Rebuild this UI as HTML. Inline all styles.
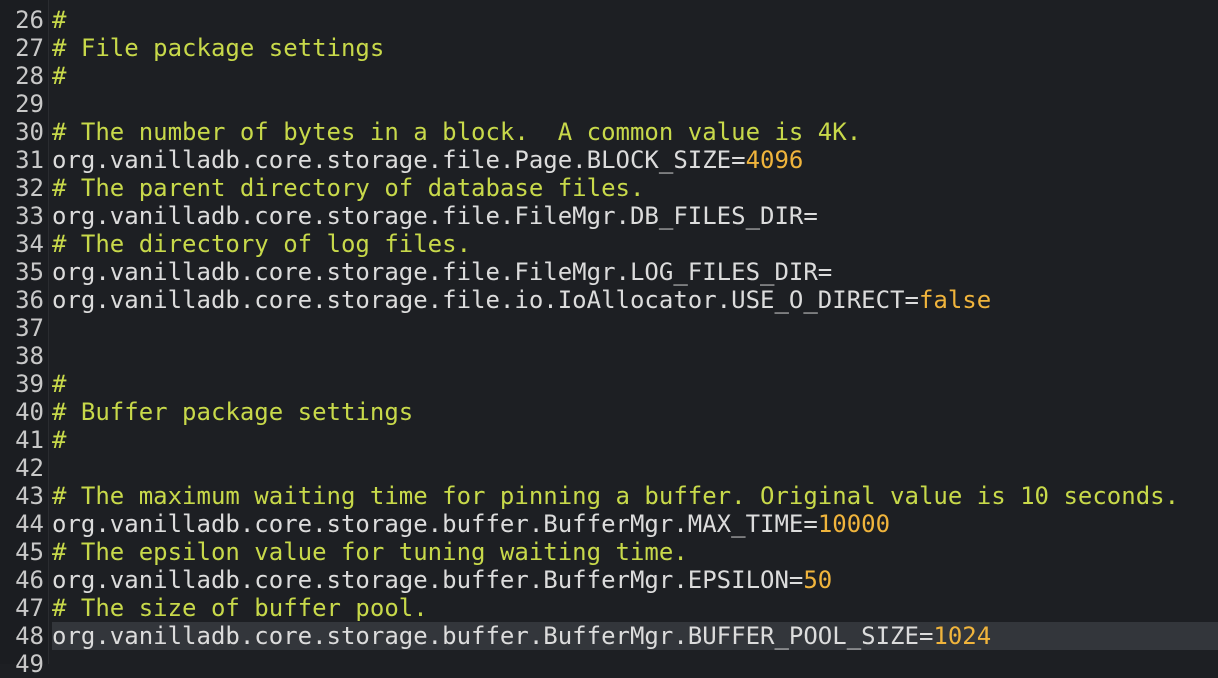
<!DOCTYPE html>
<html><head><style>
html,body{margin:0;padding:0;width:1218px;height:664px;overflow:hidden;background:#1d1f23;}
.g{position:absolute;left:0;top:0;width:48px;height:664px;background:#1b1d21;border-right:1px solid #2a2c30;}
.w{position:absolute;left:0;top:6px;width:1218px;font-family:"DejaVu Sans Mono","Liberation Mono",monospace;font-size:24px;line-height:28px;color:#dcdcdc;}
.l{height:28px;white-space:pre;position:relative;}
.n{display:inline-block;width:44px;text-align:right;color:#c8c8c8;margin-right:8px;}
.c{color:#c8d94a}.v{color:#f0b43c}
.hb{position:absolute;left:52px;top:0;right:0;height:28px;background:#33363b;}
.h span{position:relative;}
</style></head><body><div class="g"></div><div class="w">
<div class="l"><span class="n">26</span><span class="c">#</span></div>
<div class="l"><span class="n">27</span><span class="c"># File package settings</span></div>
<div class="l"><span class="n">28</span><span class="c">#</span></div>
<div class="l"><span class="n">29</span></div>
<div class="l"><span class="n">30</span><span class="c"># The number of bytes in a block.  A common value is 4K.</span></div>
<div class="l"><span class="n">31</span>org.vanilladb.core.storage.file.Page.BLOCK_SIZE=<span class="v">4096</span></div>
<div class="l"><span class="n">32</span><span class="c"># The parent directory of database files.</span></div>
<div class="l"><span class="n">33</span>org.vanilladb.core.storage.file.FileMgr.DB_FILES_DIR=</div>
<div class="l"><span class="n">34</span><span class="c"># The directory of log files.</span></div>
<div class="l"><span class="n">35</span>org.vanilladb.core.storage.file.FileMgr.LOG_FILES_DIR=</div>
<div class="l"><span class="n">36</span>org.vanilladb.core.storage.file.io.IoAllocator.USE_O_DIRECT=<span class="v">false</span></div>
<div class="l"><span class="n">37</span></div>
<div class="l"><span class="n">38</span></div>
<div class="l"><span class="n">39</span><span class="c">#</span></div>
<div class="l"><span class="n">40</span><span class="c"># Buffer package settings</span></div>
<div class="l"><span class="n">41</span><span class="c">#</span></div>
<div class="l"><span class="n">42</span></div>
<div class="l"><span class="n">43</span><span class="c"># The maximum waiting time for pinning a buffer. Original value is 10 seconds.</span></div>
<div class="l"><span class="n">44</span>org.vanilladb.core.storage.buffer.BufferMgr.MAX_TIME=<span class="v">10000</span></div>
<div class="l"><span class="n">45</span><span class="c"># The epsilon value for tuning waiting time.</span></div>
<div class="l"><span class="n">46</span>org.vanilladb.core.storage.buffer.BufferMgr.EPSILON=<span class="v">50</span></div>
<div class="l"><span class="n">47</span><span class="c"># The size of buffer pool.</span></div>
<div class="l h"><div class="hb"></div><span class="n">48</span><span>org.vanilladb.core.storage.buffer.BufferMgr.BUFFER_POOL_SIZE=</span><span class="v">1024</span></div>
<div class="l"><span class="n">49</span></div>
</div></body></html>
